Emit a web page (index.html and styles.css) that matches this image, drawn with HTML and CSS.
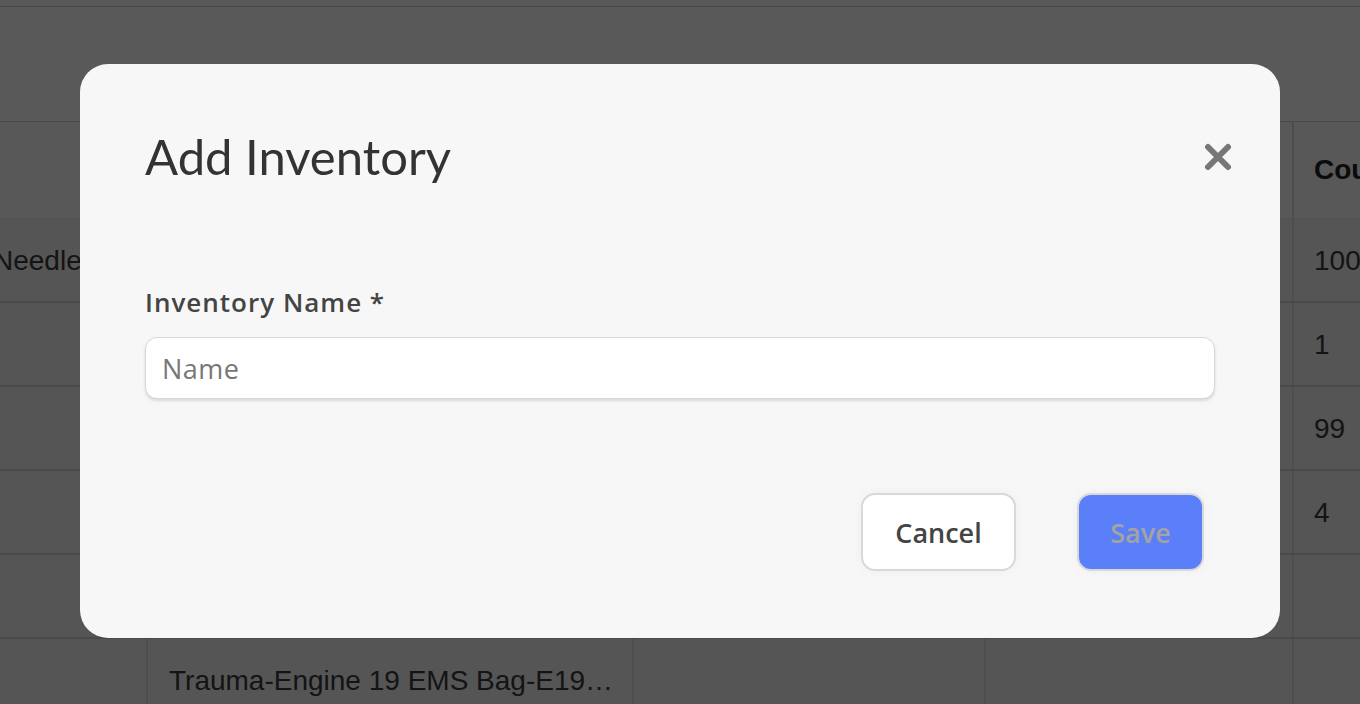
FILE: index.html
```html
<!DOCTYPE html>
<html lang="en">
<head>
<meta charset="utf-8">
<title>Add Inventory</title>
<link rel="stylesheet" href="styles.css">
</head>
<body>
<div class="page">
  <div class="topbar"></div>
  <div class="toolbar"></div>
  <div class="table">
    <div class="row head">
      <div class="cell c1"></div>
      <div class="cell c2">Name</div>
      <div class="cell c3">Location</div>
      <div class="cell c4">Type</div>
      <div class="cell c5">Count</div>
    </div>
    <div class="row">
      <div class="cell c1 clip">Needle</div>
      <div class="cell c2"></div>
      <div class="cell c3"></div>
      <div class="cell c4"></div>
      <div class="cell c5">100</div>
    </div>
    <div class="row">
      <div class="cell c1"></div>
      <div class="cell c2"></div>
      <div class="cell c3"></div>
      <div class="cell c4"></div>
      <div class="cell c5">1</div>
    </div>
    <div class="row">
      <div class="cell c1"></div>
      <div class="cell c2"></div>
      <div class="cell c3"></div>
      <div class="cell c4"></div>
      <div class="cell c5">99</div>
    </div>
    <div class="row">
      <div class="cell c1"></div>
      <div class="cell c2"></div>
      <div class="cell c3"></div>
      <div class="cell c4"></div>
      <div class="cell c5">4</div>
    </div>
    <div class="row">
      <div class="cell c1"></div>
      <div class="cell c2"></div>
      <div class="cell c3"></div>
      <div class="cell c4"></div>
      <div class="cell c5"></div>
    </div>
    <div class="row">
      <div class="cell c1"></div>
      <div class="cell c2"><span class="ellip">Trauma-Engine 19 EMS Bag-E19…</span></div>
      <div class="cell c3"></div>
      <div class="cell c4"></div>
      <div class="cell c5"></div>
    </div>
  </div>
</div>

<div class="overlay">
  <div class="modal" role="dialog" aria-labelledby="modal-title">
    <div class="modal-head">
      <h1 id="modal-title" class="modal-title">Add Inventory</h1>
      <button class="close" aria-label="Close">
        <svg width="28" height="28" viewBox="0 0 28 28" aria-hidden="true">
          <path d="M4 4 L24 24 M24 4 L4 24" stroke="#777777" stroke-width="6" stroke-linecap="round" fill="none"/>
        </svg>
      </button>
    </div>
    <label class="field-label" for="inv-name">Inventory Name *</label>
    <input id="inv-name" class="field-input" type="text" placeholder="Name">
    <div class="actions">
      <button class="btn btn-cancel">Cancel</button>
      <button class="btn btn-save" disabled>Save</button>
    </div>
  </div>
</div>
</body>
</html>
```

FILE: styles.css
```css
* { box-sizing: border-box; }

html, body {
  margin: 0;
  padding: 0;
  height: 100%;
  overflow: hidden;
}

body {
  background: #ffffff;
  font-family: "Liberation Sans", Arial, sans-serif;
  color: #333333;
}

.page {
  width: 1360px;
}

.topbar {
  height: 7px;
  border-bottom: 1px solid #cfcfcf;
  background: #ffffff;
}

.toolbar {
  height: 115px;
  background: #ffffff;
  border-bottom: 1px solid #d2d2d2;
}

.table {
  display: flex;
  flex-direction: column;
}

.row {
  display: grid;
  grid-template-columns: 146px 486px 352px 308px 1fr;
  height: 84px;
  background: #f3f3f3;
  border-bottom: 2px solid #d4d4d4;
}

.row.head {
  height: 97px;
  background: #fbfbfb;
  font-weight: 700;
  border-bottom: 1px solid #e8e8e8;
}

.cell {
  display: flex;
  align-items: center;
  padding: 2px 20px 0 20px;
  font-size: 28px;
  color: #3a3a3a;
  border-left: 2px solid #dcdcdc;
  white-space: nowrap;
  overflow: hidden;
}

.row.head .cell { color: #222222; padding-top: 0; }

.cell.c1 { border-left: none; }

.cell.clip {
  padding-left: 0;
  text-indent: -7px;
}

.cell.c2 {
  padding-left: 21px;
  padding-right: 12px;
}

.ellip {
  display: block;
  overflow: hidden;
  text-overflow: ellipsis;
}

.overlay {
  position: fixed;
  inset: 0;
  background: rgba(0, 0, 0, 0.65);
  display: flex;
  align-items: center;
  justify-content: center;
  padding-bottom: 2px;
}

.modal {
  width: 1200px;
  height: 574px;
  background: #f7f7f7;
  border-radius: 28px;
  padding: 64px 65px 67px 65px;
  display: flex;
  flex-direction: column;
}

.modal-head {
  display: flex;
  justify-content: space-between;
  align-items: flex-start;
}

.modal-title {
  margin: 0;
  font-family: "Lato", "Noto Sans", sans-serif;
  font-weight: 400;
  font-size: 49px;
  line-height: 56px;
  color: #333333;
}

.close {
  border: none;
  background: transparent;
  padding: 0;
  margin: 15px -17px 0 0;
  width: 28px;
  height: 28px;
  cursor: pointer;
  display: flex;
}

.field-label {
  margin-top: 101px;
  font-family: "Open Sans", sans-serif;
  font-weight: 600;
  font-size: 26px;
  letter-spacing: 1px;
  line-height: 34px;
  color: #444444;
}

.field-input {
  margin-top: 18px;
  width: 100%;
  height: 62px;
  border: 1px solid #d8d8d8;
  border-radius: 12px;
  background: #ffffff;
  box-shadow: 0 2px 3px rgba(0, 0, 0, 0.12);
  padding: 0 16px;
  font-family: "Open Sans", sans-serif;
  font-size: 27px;
  letter-spacing: 0.5px;
  color: #333333;
  outline: none;
}

.field-input::placeholder {
  color: #777777;
}

.actions {
  margin-top: auto;
  display: flex;
  justify-content: flex-end;
  gap: 61px;
  padding-right: 11px;
}

.btn {
  height: 78px;
  border-radius: 14px;
  border: 2px solid #d9d9d9;
  font-family: "Open Sans", sans-serif;
  font-weight: 600;
  font-size: 27px;
  box-shadow: 0 0 12px rgba(0, 0, 0, 0.04);
  cursor: pointer;
}

.btn-cancel {
  width: 155px;
  background: #ffffff;
  color: #444444;
}

.btn-save {
  width: 127px;
  background: #5b7ff8;
  color: #a3a3a3;
}
```
